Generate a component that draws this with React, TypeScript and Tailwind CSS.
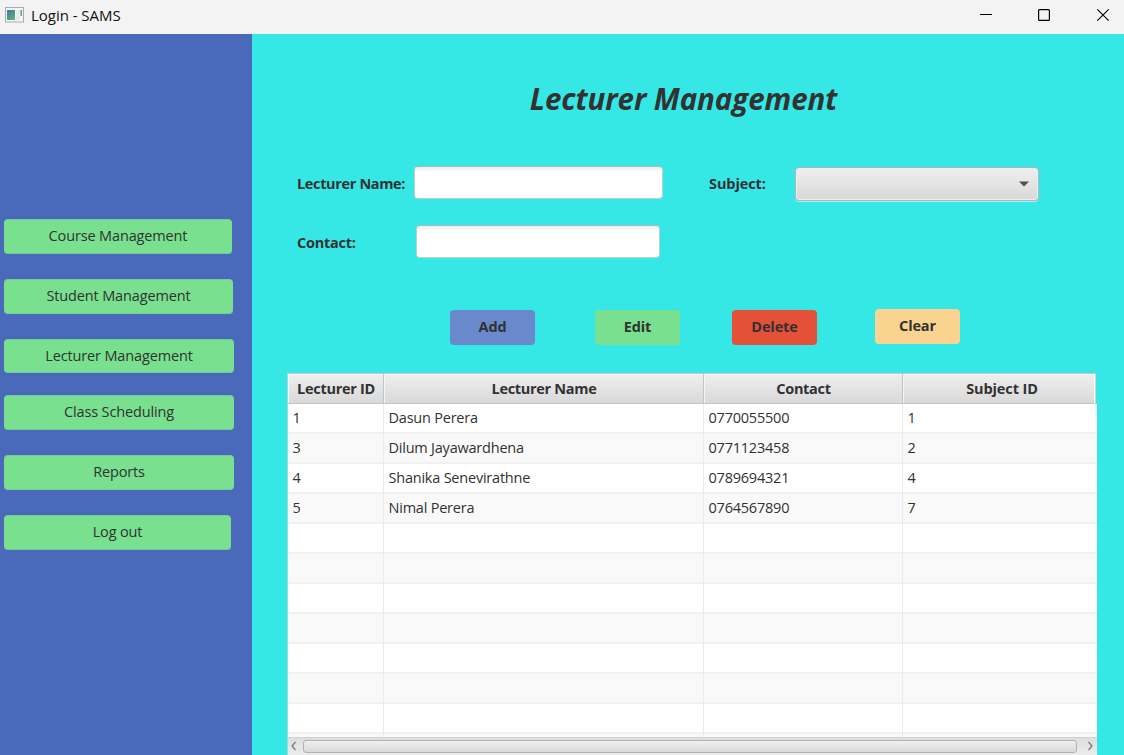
import React from "react";

const navItems = [
  { label: "Course Management", box: "w-[228px]", gap: "mb-[25.5px] h-[34.5px]" },
  { label: "Student Management", box: "w-[229px]", gap: "mb-[25.5px] h-[34.5px]" },
  { label: "Lecturer Management", box: "w-[230px]", gap: "mb-[22px] h-[34px]" },
  { label: "Class Scheduling", box: "w-[230px]", gap: "mb-[25.5px] h-[34.5px]" },
  { label: "Reports", box: "w-[230px]", gap: "mb-[25.5px] h-[34.5px]" },
  { label: "Log out", box: "w-[227px]", gap: "h-[34.5px]" },
];

const lecturers = [
  ["1", "Dasun Perera", "0770055500", "1"],
  ["3", "Dilum Jayawardhena", "0771123458", "2"],
  ["4", "Shanika Senevirathne", "0789694321", "4"],
  ["5", "Nimal Perera", "0764567890", "7"],
];

const rows = [...lecturers, ...Array.from({ length: 8 }, () => ["", "", "", ""])];

const columns = ["Lecturer ID", "Lecturer Name", "Contact", "Subject ID"];

function TitleBar() {
  return (
    <header className="flex h-[34px] shrink-0 items-start bg-[#f3f3f3]">
      <svg className="mt-[7px] ml-[5px]" width="19" height="16" viewBox="0 0 19 16">
        <defs>
          <linearGradient id="pane" x1="0" y1="0" x2="0.6" y2="1">
            <stop offset="0" stopColor="#3f78a0" />
            <stop offset="1" stopColor="#5aad7c" />
          </linearGradient>
        </defs>
        <rect x="0.5" y="0.5" width="18" height="14.5" fill="#f5f5f6" stroke="#a9abb3" />
        <rect x="2" y="3" width="8" height="10" fill="url(#pane)" />
        <rect x="11" y="3" width="4" height="10" fill="#e9eaee" />
        <rect x="15.5" y="3" width="1.5" height="6" fill="#55a287" />
      </svg>
      <span className="mt-[5px] ml-[7px] text-[15px] leading-[20px] tracking-[-0.03px] text-[#111]">Login - SAMS</span>
      <svg className="ml-auto" width="164" height="34" viewBox="0 0 164 34" fill="none" stroke="#000">
        <path d="M20 14.5H32" />
        <rect x="78.6" y="9.6" width="10.8" height="10.8" rx="1" strokeWidth="1.2" />
        <path d="M137.3 9.3L148.7 20.7M148.7 9.3L137.3 20.7" strokeWidth="1.15" />
      </svg>
    </header>
  );
}

function Sidebar() {
  return (
    <aside className="flex w-[252px] shrink-0 flex-col items-start bg-[#4a69bb] pt-[185px] pl-1">
      {navItems.map((item) => (
        <button
          key={item.label}
          className={`${item.box} ${item.gap} flex shrink-0 items-center justify-center rounded-[4px] border-y border-[#70cc9a] bg-[#78e08f] text-[14.5px] leading-5 tracking-[-0.14px]`}
        >
          {item.label}
        </button>
      ))}
    </aside>
  );
}

function Field({ className }: { className: string }) {
  return (
    <input
      className={`${className} h-[33px] rounded-[4px] border border-[#b9cfcf] border-t-[#b0b8b8] bg-white bg-gradient-to-b from-[#ececec] to-white to-[5px] outline-none`}
    />
  );
}

function Form() {
  return (
    <>
      <div className="mt-[47px] flex h-[35px] items-start pl-[45px] text-[14.5px] font-bold tracking-[-0.35px]">
        <label className="mt-[8px] w-[117px] leading-5 whitespace-nowrap">Lecturer Name:</label>
        <Field className="w-[249px]" />
        <label className="mt-[8px] ml-[46px] w-[86px] leading-5 tracking-[-0.1px]">Subject:</label>
        <button className="mt-px -ml-[0.5px] flex h-[34px] w-[244px] items-center justify-end rounded-[4px] border border-[#b4b4b4] bg-gradient-to-b from-[#efefef] to-[#d8d8d8] pr-[9px] shadow-[0_1px_0_#a5f2ef,inset_0_0_0_1px_#eeeeee]">
          <svg width="10" height="6" viewBox="0 0 10 6">
            <path d="M0 0.5H10L5 5.5Z" fill="#505050" />
          </svg>
        </button>
      </div>
      <div className="mt-[24px] flex h-[33px] items-start pl-[45px] text-[14.5px] font-bold tracking-[-0.25px]">
        <label className="mt-[8px] w-[119px] leading-5">Contact:</label>
        <Field className="w-[244px]" />
      </div>
    </>
  );
}

function Actions() {
  const base = "flex w-[85px] items-center justify-center rounded-[4px] text-[14.5px] leading-5 font-bold tracking-[-0.15px]";
  return (
    <div className="mt-[51px] flex h-[36px] items-start pl-[198px]">
      <button className={`${base} mt-px h-[34.5px] bg-[#6a89cc]`}>Add</button>
      <button className={`${base} mt-px ml-[60px] h-[34.5px] bg-[#78e08f]`}>Edit</button>
      <button className={`${base} mt-px ml-[52px] h-[34.5px] bg-[#e55039]`}>Delete</button>
      <button className={`${base} ml-[58px] h-[35px] bg-[#fad390] pb-[2px]`}>Clear</button>
    </div>
  );
}

function LecturerTable() {
  return (
    <div className="mt-[28px] ml-[35px] flex h-[382px] w-[810px] flex-col border-l border-[#8fe3e1] bg-white">
      <div className="flex h-[31px] shrink-0 bg-[#35e8e5]">
        <div className="grid w-[808px] grid-cols-[96px_320px_199px_192px] border-t border-r border-[#c8c8c8] border-r-[#c8dada] bg-gradient-to-b from-[#efefef] to-[#d8d8d8]">
          {columns.map((name) => (
            <div
              key={name}
              className="flex items-center justify-center border-r border-b border-[#c4c4c4] pt-px pl-px text-[14.5px] leading-5 font-bold tracking-[-0.3px] whitespace-nowrap shadow-[inset_1px_1px_0_#f4f4f4] last:border-r-white last:pl-[7px] last:tracking-[-0.1px]"
            >
              {name}
            </div>
          ))}
        </div>
      </div>
      <div className="h-[333px] overflow-hidden">
        {rows.map((row, i) => (
          <div
            key={i}
            className="grid h-[30px] grid-cols-[96px_320px_199px_194px] border-b-2 border-[#f1f1f1] odd:bg-white even:bg-[#f9f9f9]"
          >
            {row.map((cell, j) => (
              <div
                key={j}
                className="-mb-[2px] border-r border-[#ebebeb] pt-1 pl-[4.5px] text-[14.5px] leading-5 tracking-[-0.22px] whitespace-nowrap last:border-r-0"
              >
                {cell}
              </div>
            ))}
          </div>
        ))}
      </div>
      <div className="flex h-[18px] shrink-0 items-center border-t border-[#d0d0d0] bg-gradient-to-b from-[#dedede] to-[#ececec] pb-px">
        <svg className="ml-[2px]" width="7" height="10" viewBox="0 0 7 10" fill="none" stroke="#777" strokeWidth="1.2">
          <path d="M5.5 1L2 5L5.5 9" />
        </svg>
        <div className="ml-[6px] h-[13px] w-[774px] rounded-[3px] border border-[#b2b2b2] bg-gradient-to-b from-[#efefef] to-[#d9d9d9]" />
        <svg className="ml-[10px]" width="7" height="10" viewBox="0 0 7 10" fill="none" stroke="#777" strokeWidth="1.2">
          <path d="M1.5 1L5 5L1.5 9" />
        </svg>
      </div>
    </div>
  );
}

export default function App() {
  return (
    <div className="flex h-[755px] w-[1124px] flex-col overflow-hidden font-['Open_Sans',sans-serif] text-[#323232]">
      <TitleBar />
      <div className="flex min-h-0 flex-1">
        <Sidebar />
        <main className="flex min-w-0 flex-1 flex-col bg-[#35e8e5]">
          <h1 className="mt-[45px] h-10 pr-[9px] text-center text-[29.5px] leading-10 font-bold tracking-[-0.08px] italic">Lecturer Management</h1>
          <Form />
          <Actions />
          <LecturerTable />
        </main>
      </div>
    </div>
  );
}
